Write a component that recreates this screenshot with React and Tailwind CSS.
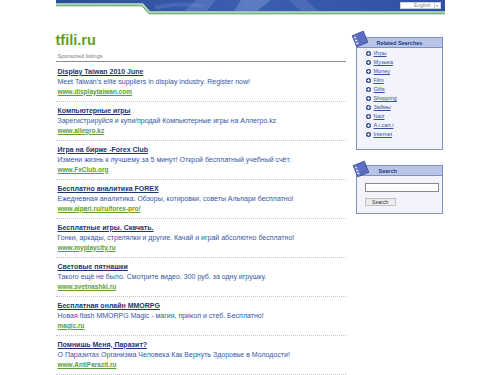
import React from "react";

const listings = [
  {
    title: "Display Taiwan 2010 June",
    desc: "Meet Taiwan's elite suppliers in display industry. Register now!",
    url: "www.displaytaiwan.com",
  },
  {
    title: "Компьютерные игры",
    desc: "Зарегистрируйся и купи/продай Компьютерные игры на Аллегро.kz",
    url: "www.allegro.kz",
  },
  {
    title: "Игра на бирже -Forex Club",
    desc: "Измени жизнь к лучшему за 5 минут! Открой бесплатный учебный счёт.",
    url: "www.FxClub.org",
  },
  {
    title: "Бесплатно аналитика FOREX",
    desc: "Ежедневная аналитика. Обзоры, котировки, советы Альпари бесплатно!",
    url: "www.alpari.ru/ru/forex-pro/",
  },
  {
    title: "Бесплатные игры. Скачать.",
    desc: "Гонки, аркады, стрелялки и другие. Качай и играй абсолютно бесплатно!",
    url: "www.myplaycity.ru",
  },
  {
    title: "Световые пятнашки",
    desc: "Такого ещё не было. Смотрите видео. 300 руб. за одну игрушку.",
    url: "www.svetnashki.ru",
  },
  {
    title: "Бесплатная онлайн MMORPG",
    desc: "Новая flash MMORPG Magic - магия, прикол и стеб. Бесплатно!",
    url: "magic.ru",
  },
  {
    title: "Помнишь Меня, Паразит?",
    desc: "О Паразитах Организма Человека Как Вернуть Здоровье в Молодости!",
    url: "www.AntiParazit.ru",
  },
];

const related = [
  "Игры",
  "Музыка",
  "Money",
  "Film",
  "Gifts",
  "Shopping",
  "Займы",
  "Naiz",
  "A.i.cart.i",
  "Internet",
];

const Notebook = ({ className }) => (
  <svg className={className} width="18" height="18" viewBox="0 0 18 18">
    <g transform="rotate(-22 9 9)">
      <rect x="3" y="3" width="12" height="12" fill="#5b6ec2" stroke="#3d4f9e" strokeWidth="0.8" />
      <rect x="4.5" y="3.5" width="1.2" height="11" fill="#8493d6" />
      <rect x="3.6" y="5.5" width="2.4" height="0.9" fill="#ffffff" />
      <rect x="3.6" y="8.5" width="2.4" height="0.9" fill="#ffffff" />
      <rect x="3.6" y="11.5" width="2.4" height="0.9" fill="#ffffff" />
    </g>
  </svg>
);

const Bullet = () => (
  <svg width="5" height="5" viewBox="0 0 5 5" className="shrink-0">
    <circle cx="2.5" cy="2.5" r="2.5" fill="#2f4790" />
    <rect x="1" y="2.1" width="3" height="0.8" fill="#ffffff" />
    <rect x="2.1" y="1" width="0.8" height="3" fill="#ffffff" />
  </svg>
);

const App = () => {
  return (
    <div className="min-h-screen bg-white font-['Liberation_Sans',Arial,sans-serif]">
      <div className="w-[389px] mx-auto">
        {/* Header strip */}
        <div className="relative h-[15px]">
          <svg className="absolute inset-0" width="389" height="15" viewBox="0 0 389 15">
            <defs>
              <linearGradient id="hb" x1="0" y1="0" x2="1" y2="0">
                <stop offset="0" stopColor="#2c4c9c" />
                <stop offset="0.5" stopColor="#3d5eae" />
                <stop offset="1" stopColor="#2f50a2" />
              </linearGradient>
            </defs>
            <path d="M0 0 H389 V11.5 H94 L87 3.5 H0 Z" fill="url(#hb)" />
            <path d="M140 0 L160 0 L150 11.5 L128 11.5 Z" fill="#6d8acb" opacity="0.45" />
            <path d="M185 0 L215 0 L200 11.5 L178 11.5 Z" fill="#7c97d2" opacity="0.5" />
            <path d="M232 0 L250 0 L262 11.5 L246 11.5 Z" fill="#6784c8" opacity="0.4" />
            <path d="M98 6 Q120 0 150 4 L148 8 Q120 4 100 10 Z" fill="#6a86c8" opacity="0.35" />
            <polyline points="0,4.4 86.6,4.4 93.6,12.4 389,12.4" fill="none" stroke="#a4d6a8" strokeWidth="1.6" />
            <polyline points="0,5.8 86,5.8 93,13.8 389,13.8" fill="none" stroke="#4f9562" strokeWidth="1" />
          </svg>
          <div className="absolute right-[4px] top-[2px] flex h-[7px] w-[41px] bg-white border border-[#c9cfe0]">
            <span className="flex-1 text-right pr-[3px] text-[5px] leading-[5px] text-[#8a8a8a]">English</span>
            <span className="w-[6px] border-l border-[#c9cfe0] text-[4px] leading-[5px] text-center text-[#999]">▾</span>
          </div>
        </div>

        <div className="flex">
          {/* Listings */}
          <main className="w-[290px] pt-[18px]">
            <h1 className="text-[14.5px] leading-none font-bold text-[#62a023]">tfili.ru</h1>
            <div className="mt-[5px] pb-[1px] pl-[2px] text-[5.5px] leading-[7px] text-[#7a7a7a] border-b border-[#8c8c8c]">
              Sponsored listings
            </div>
            {listings.map((item, index) => (
              <div
                key={index}
                className={`${index === 0 ? "pt-[5px]" : "pt-[4px]"} pb-[4px] pl-[2px] border-b border-dotted border-[#c4c4c4]`}
              >
                <a href="#" className="block text-[7px] leading-[10px] font-bold text-[#1c3475] underline">
                  {item.title}
                </a>
                <div className="text-[7px] leading-[9px] text-[#3556a6] whitespace-nowrap">{item.desc}</div>
                <a href="#" className="block text-[6.5px] leading-[11px] font-bold text-[#5c9e38] underline">
                  {item.url}
                </a>
              </div>
            ))}
          </main>

          {/* Sidebar */}
          <aside className="ml-auto mr-[2px] w-[87px] pt-[22px]">
            <div className="relative border border-[#8191c4] bg-[#f3f4fb]">
              <Notebook className="absolute -left-[6px] -top-[8px]" />
              <div className="h-[10px] bg-[#b8c5e6] border-b border-[#8191c4] pl-[20px] text-[5.5px] leading-[10px] font-bold text-[#23397e]">
                Related Searches
              </div>
              <ul className="pt-[1px] pb-[10px] pl-[9px]">
                {related.map((r, i) => (
                  <li key={i} className="flex items-center gap-[3px] h-[9px]">
                    <Bullet />
                    <a href="#" className="text-[5.5px] leading-[9px] text-[#3350a3] underline">
                      {r}
                    </a>
                  </li>
                ))}
              </ul>
            </div>

            <div className="relative mt-[15px] border border-[#8191c4] bg-[#f3f4fb]">
              <Notebook className="absolute -left-[5px] -top-[6px]" />
              <div className="h-[10px] bg-[#b8c5e6] border-b border-[#8191c4] pl-[22px] text-[5.5px] leading-[10px] font-bold text-[#23397e]">
                Search
              </div>
              <div className="pt-[7px] pb-[7px] pl-[8px]">
                <div className="w-[74px] h-[9px] bg-white border border-[#8a8a8a]" />
                <div className="mt-[6px] w-[31px] h-[8px] bg-[#ececec] border border-[#c2c2c2] text-center text-[5px] leading-[6px] text-[#333]">
                  Search
                </div>
              </div>
            </div>
          </aside>
        </div>
      </div>
    </div>
  );
};

export default App;
